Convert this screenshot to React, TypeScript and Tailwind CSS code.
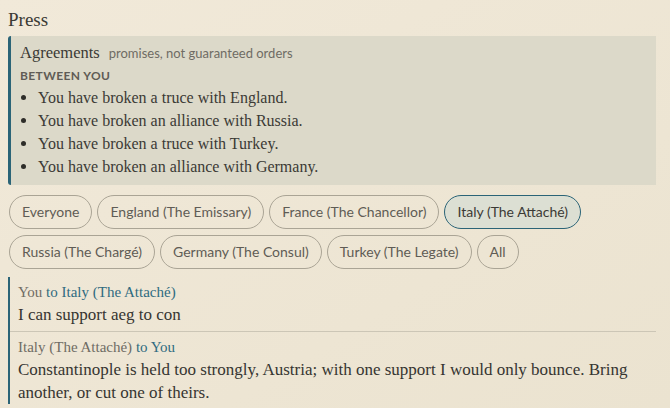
import React from 'react';

const serif = { fontFamily: '"Liberation Serif", serif' };

const agreements = [
    'You have broken a truce with England.',
    'You have broken an alliance with Russia.',
    'You have broken a truce with Turkey.',
    'You have broken an alliance with Germany.',
];

const chips = [
    ['Everyone', 'England (The Emissary)', 'France (The Chancellor)', 'Italy (The Attaché)'],
    ['Russia (The Chargé)', 'Germany (The Consul)', 'Turkey (The Legate)', 'All'],
];

const App: React.FC = () => {
    return (
        <div className="min-h-[408px] bg-gradient-to-br from-[#f1e9d9] to-[#ebe3d0] px-2 pt-[8px] text-[#3b3a35]">
            <h2 className="font-['Liberation_Serif',serif] text-[19px] leading-[23px] text-[#3b3a35]">Press</h2>

            <div className="mt-[5px] mr-[6px] rounded-l-[3px] border-l-[3px] border-[#2b6477] bg-[#dcd9c9] pl-[9px] pt-[5px] pb-[7px]">
                <div className="flex items-baseline gap-[9px]">
                    <span className="font-['Liberation_Serif',serif] text-[16.5px]">Agreements</span>
                    <span className="font-['Lato',sans-serif] text-[13px] text-[#6f6c64]">promises, not guaranteed orders</span>
                </div>
                <div className="mt-[1px] font-['Lato',sans-serif] text-[12px] font-bold tracking-[0.4px] text-[#5f5c55]">BETWEEN YOU</div>
                <ul className="mt-[1px]">
                    {agreements.map((a) => (
                        <li key={a} className="flex items-center font-['Liberation_Serif',serif] text-[16px] leading-[23px]">
                            <span className="ml-[1px] mr-[12px] h-[5px] w-[5px] rounded-full bg-[#2e2d29]" />
                            {a}
                        </li>
                    ))}
                </ul>
            </div>

            <div className="mt-[10px] flex flex-col gap-[6px] pl-[1px]">
                {chips.map((row, i) => (
                    <div key={i} className="flex gap-[5px]">
                        {row.map((c) => {
                            const active = c === 'Italy (The Attaché)';
                            return (
                                <button
                                    key={c}
                                    className={
                                        active
                                            ? "h-[34px] rounded-full border border-[#2b6477] bg-[#dcdfd3] px-[12px] font-['Lato',sans-serif] text-[14px] text-[#3b3a35]"
                                            : "h-[34px] rounded-full border border-[#aaa495] px-[12px] font-['Lato',sans-serif] text-[14px] text-[#5f5c55]"
                                    }
                                >
                                    {c}
                                </button>
                            );
                        })}
                    </div>
                ))}
            </div>

            <div className="mt-[8px] mr-[6px] border-l-[2px] border-[#2b6477]" style={serif}>
                <div className="pl-[8px] pt-[5px] pb-[5px]">
                    <div className="text-[15px] leading-[21px] text-[#6f6c64]">
                        You <span className="text-[#2f6b80]">to Italy (The Attaché)</span>
                    </div>
                    <div className="text-[17px] leading-[23px] text-[#363531]">I can support aeg to con</div>
                </div>
                <div className="border-t border-[#ccc6b6] pl-[8px] pt-[5px]">
                    <div className="text-[15px] leading-[21px] text-[#6f6c64]">
                        Italy (The Attaché) <span className="text-[#2f6b80]">to You</span>
                    </div>
                    <div className="pr-[10px] text-[17px] leading-[23px] text-[#363531]">
                        Constantinople is held too strongly, Austria; with one support I would only bounce. Bring another, or cut one of theirs.
                    </div>
                </div>
            </div>
        </div>
    );
};

export default App;
